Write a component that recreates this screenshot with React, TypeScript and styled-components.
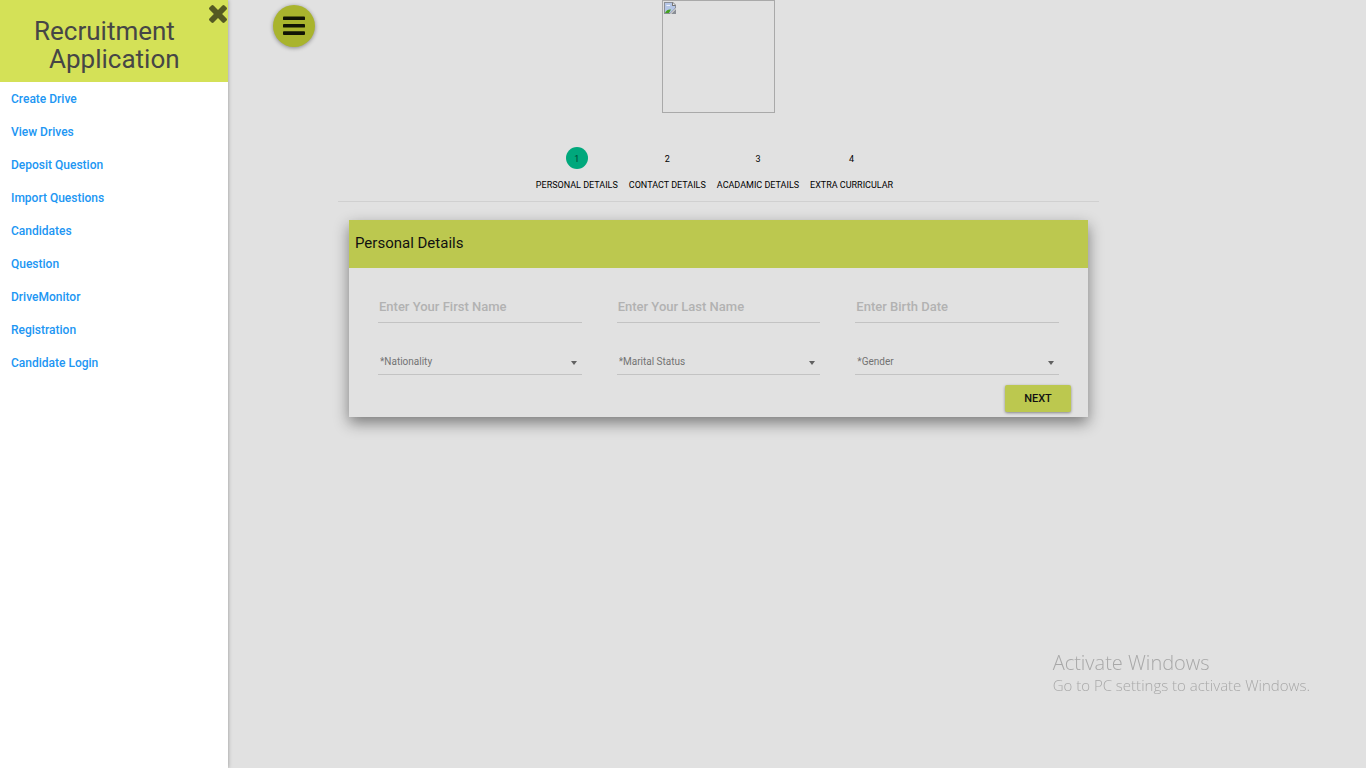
import React from "react";
import styled, { createGlobalStyle } from "styled-components";

const GlobalStyle = createGlobalStyle`
  * { box-sizing: border-box; }
  body {
    margin: 0;
    background: #e1e1e1;
    font-family: Roboto, sans-serif;
    color: #111;
  }
`;

const Page = styled.div`
  display: flex;
  min-height: 100vh;
`;

const Sidebar = styled.aside`
  flex: 0 0 228px;
  background: #fff;
  box-shadow: 0 0 4px rgba(0, 0, 0, 0.35);
`;

const SidebarHeader = styled.header`
  position: relative;
  padding: 17px 0 9px 34px;
  background: #d4e157;
`;

const AppTitle = styled.h1`
  margin: 0;
  font-size: 26px;
  line-height: 28px;
  font-weight: 400;
  color: #464646;
`;

const TitleLine = styled.span<{ $indent?: boolean }>`
  display: block;
  padding-left: ${(p) => (p.$indent ? "15px" : "0")};
`;

const CloseButton = styled.button`
  position: absolute;
  top: 5px;
  right: 1px;
  display: flex;
  padding: 0;
  border: 0;
  background: none;
  color: #555a23;
  cursor: pointer;
`;

const Nav = styled.nav`
  padding-top: 1px;
`;

const NavLink = styled.a`
  display: block;
  padding: 0 11px;
  font-size: 12px;
  line-height: 33px;
  font-weight: 500;
  color: #2196f3;
  text-decoration: none;
`;

const Main = styled.main`
  flex: 1;
  display: grid;
  grid-template-columns: 110px minmax(0, 1fr) 267px;
  align-items: start;
`;

const MenuButton = styled.button`
  display: flex;
  align-items: center;
  justify-content: center;
  width: 42px;
  height: 42px;
  margin: 5px 0 0 45px;
  padding: 0;
  border: 0;
  border-radius: 50%;
  background: #a9b42d;
  color: #111405;
  box-shadow: 0 1px 4px rgba(0, 0, 0, 0.4);
  cursor: pointer;
`;

const Content = styled.div`
  display: flex;
  flex-direction: column;
`;

const LogoFrame = styled.div`
  align-self: center;
  width: 113px;
  height: 113px;
  padding: 1px;
  border: 1px solid #a9a9a9;
`;

const Steps = styled.ol`
  display: flex;
  justify-content: center;
  gap: 11px;
  margin: 0;
  padding: 34px 8px 10px 0;
  list-style: none;
  border-bottom: 1px solid #d0d0d0;
`;

const Step = styled.li`
  display: flex;
  flex-direction: column;
  align-items: center;
  gap: 10px;
  font-size: 9px;
  line-height: 12px;
  color: #000;
  text-transform: uppercase;
`;

const StepNumber = styled.span<{ $active?: boolean }>`
  width: 22px;
  height: 22px;
  border-radius: 50%;
  line-height: 24px;
  text-align: center;
  color: ${(p) => (p.$active ? "#00402f" : "#000")};
  background: ${(p) => (p.$active ? "#00a87c" : "transparent")};
`;

const Card = styled.form`
  margin: 18px 11px 0;
  box-shadow: 0 6px 14px rgba(0, 0, 0, 0.45);
`;

const CardTitle = styled.h2`
  margin: 0;
  padding: 0 6px 2px;
  background: #bcc84f;
  font-size: 15px;
  line-height: 46px;
  font-weight: 400;
`;

const Fields = styled.div`
  display: grid;
  grid-template-columns: repeat(3, minmax(0, 1fr));
  gap: 22px 35px;
  padding: 25px 29px 0;
`;

const TextField = styled.input`
  width: 100%;
  height: 30px;
  padding: 0 1px 2px;
  border: 0;
  border-bottom: 1px solid #c3c3c3;
  border-radius: 0;
  outline: 0;
  background: none;
  font: 500 13px Roboto, sans-serif;
  color: #333;
  &::placeholder { color: #b2b2b2; opacity: 1; }
`;

const SelectWrap = styled.div`
  position: relative;
`;

const SelectField = styled.select`
  display: block;
  width: 100%;
  height: 30px;
  padding: 4px 2px 0;
  border: 0;
  border-bottom: 1px solid #c3c3c3;
  border-radius: 0;
  outline: 0;
  appearance: none;
  background: none;
  font: 400 10px Roboto, sans-serif;
  color: #737373;
`;

const Arrow = styled.svg`
  position: absolute;
  right: 5px;
  top: 16px;
  pointer-events: none;
`;

const Actions = styled.div`
  display: flex;
  justify-content: flex-end;
  padding: 10px 17px 5px;
`;

const NextButton = styled.button`
  width: 66px;
  height: 27px;
  padding: 0;
  border: 0;
  border-radius: 2px;
  background: #bcc84f;
  box-shadow: 0 1px 3px rgba(0, 0, 0, 0.4);
  font: 500 11px Roboto, sans-serif;
  color: #111;
  cursor: pointer;
`;

const Watermark = styled.div`
  position: fixed;
  right: 56px;
  bottom: 73px;
  font-family: "Open Sans", sans-serif;
  font-weight: 300;
  font-size: 15px;
  line-height: 20px;
  color: #a8a8a8;
  pointer-events: none;
`;

const WatermarkTitle = styled.div`
  font-size: 20px;
  line-height: 25px;
`;

const links = [
  "Create Drive",
  "View Drives",
  "Deposit Question",
  "Import Questions",
  "Candidates",
  "Question",
  "DriveMonitor",
  "Registration",
  "Candidate Login",
];

const steps = ["Personal Details", "Contact Details", "Acadamic Details", "Extra Curricular"];
const textFields = ["Enter Your First Name", "Enter Your Last Name", "Enter Birth Date"];
const selectFields = ["Nationality", "Marital Status", "Gender"];

const CloseIcon = () => (
  <svg width="18" height="18" viewBox="110 366 1188 1188" fill="currentColor" aria-hidden="true">
    <path d="M1298 1322q0 40-28 68l-136 136q-28 28-68 28t-68-28l-294-294-294 294q-28 28-68 28t-68-28l-136-136q-28-28-28-68t28-68l294-294-294-294q-28-28-28-68t28-68l136-136q28-28 68-28t68 28l294 294 294-294q28-28 68-28t68 28l136 136q28 28 28 68t-28 68l-294 294 294 294q28 28 28 68z" />
  </svg>
);

const BarsIcon = () => (
  <svg width="22" height="20" viewBox="0 0 22 20" fill="currentColor" aria-hidden="true">
    <rect x="0" y="0.4" width="22" height="3.7" rx="0.9" />
    <rect x="0" y="7.9" width="22" height="3.7" rx="0.9" />
    <rect x="0" y="15.3" width="22" height="3.7" rx="0.9" />
  </svg>
);

const BrokenImage = () => (
  <svg width="12" height="12" viewBox="0 0 12 12" aria-hidden="true" display="block">
    <path d="M0 0h9l3 3v9H0z" fill="#8b8f96" />
    <path d="M1 1h7v3h3v2L6 11H1z" fill="#b5c6e6" />
    <path d="M3 3h3v1H2z" fill="#eef3fb" />
    <path d="M1 11c1-3 4-4 6-3.500L5 11z" fill="#45a01f" />
    <path d="M12 6v1L7 12H6z" fill="#f3f3f3" />
    <path d="M8 0v4h4L11 3 9 1z" fill="#777" />
    <path d="M9 1v2h2z" fill="#eee" />
  </svg>
);

export default function App() {
  return (
    <>
      <GlobalStyle />
      <Page>
        <Sidebar>
          <SidebarHeader>
            <AppTitle>
              <TitleLine>Recruitment</TitleLine>
              <TitleLine $indent>Application</TitleLine>
            </AppTitle>
            <CloseButton type="button" aria-label="Close menu">
              <CloseIcon />
            </CloseButton>
          </SidebarHeader>
          <Nav>
            {links.map((l) => (
              <NavLink key={l} href="#">
                {l}
              </NavLink>
            ))}
          </Nav>
        </Sidebar>
        <Main>
          <MenuButton type="button" aria-label="Open menu">
            <BarsIcon />
          </MenuButton>
          <Content>
            <LogoFrame role="img" aria-label="Logo">
              <BrokenImage />
            </LogoFrame>
            <Steps>
              {steps.map((s, i) => (
                <Step key={s}>
                  <StepNumber $active={i === 0}>{i + 1}</StepNumber>
                  {s}
                </Step>
              ))}
            </Steps>
            <Card onSubmit={(e: React.FormEvent) => e.preventDefault()}>
              <CardTitle>Personal Details</CardTitle>
              <Fields>
                {textFields.map((f) => (
                  <TextField key={f} type="text" placeholder={f} aria-label={f} />
                ))}
                {selectFields.map((f) => (
                  <SelectWrap key={f}>
                    <SelectField aria-label={f}>
                      <option>*{f}</option>
                    </SelectField>
                    <Arrow width="6" height="4" viewBox="0 0 6 4" aria-hidden="true">
                      <path d="M0 0h6L3 4z" fill="#616161" />
                    </Arrow>
                  </SelectWrap>
                ))}
              </Fields>
              <Actions>
                <NextButton type="submit">NEXT</NextButton>
              </Actions>
            </Card>
          </Content>
        </Main>
      </Page>
      <Watermark>
        <WatermarkTitle>Activate Windows</WatermarkTitle>
        Go to PC settings to activate Windows.
      </Watermark>
    </>
  );
}
